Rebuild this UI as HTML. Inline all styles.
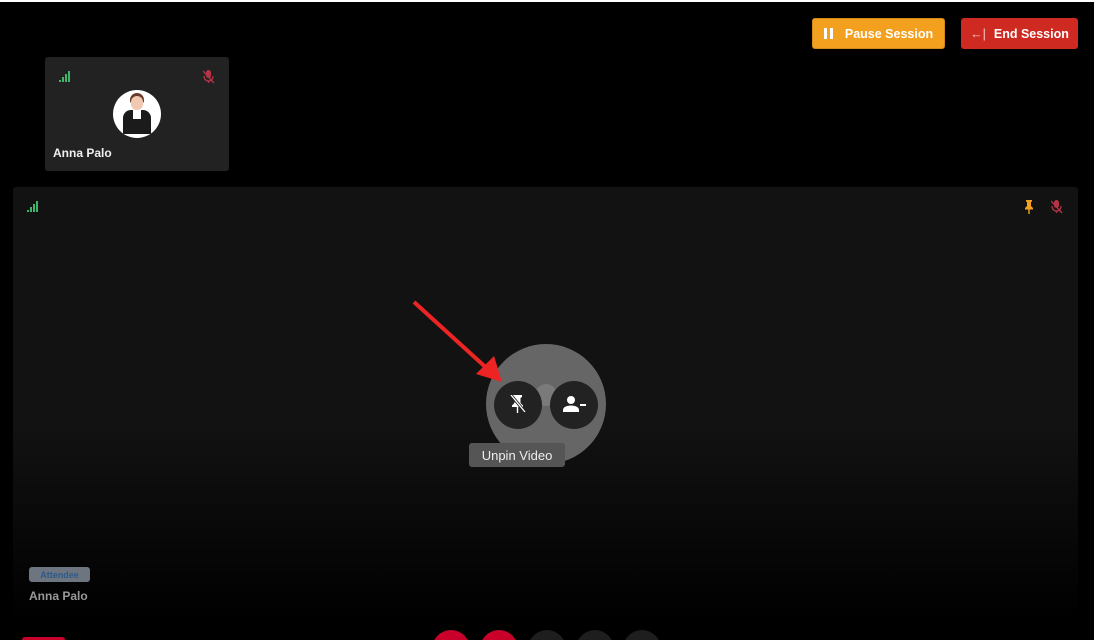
<!DOCTYPE html>
<html style="width:1094px;height:640px;overflow:hidden"><head><meta charset="utf-8"><style>
*{margin:0;padding:0;box-sizing:border-box}
html,body{width:1094px;height:640px;overflow:hidden}
body{background:#000;position:relative;font-family:"Liberation Sans",sans-serif}
.topline{position:absolute;left:0;top:0;width:1094px;height:2px;background:#fff}
.btn{position:absolute;top:18px;height:31px;border-radius:3px;color:#fff;font-weight:bold;font-size:12.5px;display:flex;align-items:center;justify-content:center}
.tile{position:absolute;left:45px;top:57px;width:184px;height:114px;background:#222;border-radius:3px}
.main{position:absolute;left:13px;top:187px;width:1065px;height:434px;border-radius:3px;background:linear-gradient(#121212 0%,#121212 55%,#000 100%)}
.clip{position:absolute;left:0;top:630px;width:1094px;height:10px;overflow:hidden}
.circ{position:absolute;top:0;width:38px;height:38px;border-radius:50%}
</style></head><body>
<div class="topline"></div>
<div class="btn" style="left:812px;width:133px;background:#f4a01f;border:1px solid #d38a1a">
<span style="display:inline-block;width:3px;height:11px;background:#fff;margin-right:3px"></span><span style="display:inline-block;width:3px;height:11px;background:#fff;margin-right:12px"></span>Pause Session</div>
<div class="btn" style="left:961px;width:117px;background:#cf2a22"><span style="font-weight:normal;margin-right:8px;color:#f4c8c4">←|</span>End Session</div>

<div class="tile">
<svg style="position:absolute;left:14px;top:14px" width="12" height="12"><rect x="0" y="9" width="2" height="2" fill="#3fb46b"/><rect x="3" y="6" width="2" height="5" fill="#3fb46b"/><rect x="6" y="3" width="2" height="8" fill="#3fb46b"/><rect x="9" y="0" width="2" height="11" fill="#3fb46b"/></svg>
<svg style="position:absolute;left:158px;top:13px" width="12" height="14"><rect x="3" y="0" width="5" height="8" rx="2.5" fill="#b13545"/><path d="M1 6c0 3 2 5 4.5 5s4.5-2 4.5-5M5.5 11v2M0 1l11 12" stroke="#b13545" stroke-width="1.3" fill="none"/></svg>
<div style="position:absolute;left:68px;top:33px;width:48px;height:48px;border-radius:50%;background:#fff;overflow:hidden">
<div style="position:absolute;left:17px;top:3px;width:14px;height:10px;border-radius:7px 7px 2px 2px;background:#6a3a2a"></div>
<div style="position:absolute;left:18px;top:6px;width:12px;height:14px;border-radius:6px;background:#f1c8b0"></div>
<div style="position:absolute;left:10px;top:20px;width:28px;height:24px;border-radius:8px 8px 0 0;background:#1b1b1b"></div>
<div style="position:absolute;left:20px;top:20px;width:8px;height:9px;background:#fff"></div>
</div>
<div style="position:absolute;left:8px;top:89px;color:#eee;font-weight:bold;font-size:12px">Anna Palo</div>
</div>

<div class="main">
<svg style="position:absolute;left:14px;top:14px" width="12" height="12"><rect x="0" y="9" width="2" height="2" fill="#3fb46b"/><rect x="3" y="6" width="2" height="5" fill="#3fb46b"/><rect x="6" y="3" width="2" height="8" fill="#3fb46b"/><rect x="9" y="0" width="2" height="11" fill="#3fb46b"/></svg>
<svg style="position:absolute;left:1011px;top:13px" width="10" height="14"><path d="M2 0h6v1.5L7 2v4l2 2v1.5H1V8l2-2V2L2 1.5z M4.3 9.5h1.4V14H4.3z" fill="#f4a01f"/></svg>
<svg style="position:absolute;left:1038px;top:13px" width="12" height="14"><rect x="3" y="0" width="5" height="8" rx="2.5" fill="#b13545"/><path d="M1 6c0 3 2 5 4.5 5s4.5-2 4.5-5M5.5 11v2M0 1l11 12" stroke="#b13545" stroke-width="1.3" fill="none"/></svg>
<div style="position:absolute;left:473px;top:157px;width:120px;height:120px;border-radius:50%;background:#666"></div>
<div style="position:absolute;left:522px;top:197px;width:22px;height:22px;border-radius:50%;background:#7a7a7a"></div>
<div style="position:absolute;left:481px;top:194px;width:48px;height:48px;border-radius:50%;background:#222"></div>
<div style="position:absolute;left:537px;top:194px;width:48px;height:48px;border-radius:50%;background:#222"></div>
<svg style="position:absolute;left:497px;top:208px" width="16" height="18"><path d="M3 0h9v2l-1.5 1v5l2.5 2.5V12H2v-1.5L4.5 8V3L3 2z M6.8 12h1.4v6H6.8z" fill="#fff"/><path d="M1 0L15 17" stroke="#222" stroke-width="3"/><path d="M1 0L15 17" stroke="#fff" stroke-width="1.3"/></svg>
<svg style="position:absolute;left:550px;top:209px" width="24" height="16"><circle cx="8" cy="4" r="4" fill="#fff"/><path d="M0 16v-2c0-3 4-4.5 8-4.5s8 1.5 8 4.5v2z" fill="#fff"/><rect x="17" y="8" width="6" height="2" fill="#fff"/></svg>
<div style="position:absolute;left:456px;top:256px;width:96px;height:24px;border-radius:3px;background:#555;color:#eee;font-size:13px;display:flex;align-items:center;justify-content:center">Unpin Video</div>
<div style="position:absolute;left:16px;top:380px;width:61px;height:15px;border-radius:3px;background:#6c7580;color:#2d5a8a;font-size:9px;font-weight:bold;display:flex;align-items:center;justify-content:center">Attendee</div>
<div style="position:absolute;left:16px;top:402px;color:#999;font-size:12px;font-weight:bold">Anna Palo</div>
</div>
<svg style="position:absolute;left:0;top:0" width="1094" height="640"><path d="M414 302L492 373" stroke="#ec2424" stroke-width="4"/><path d="M502 382L476 374L494 356z" fill="#ec2424"/></svg>

<div class="clip">
<div style="position:absolute;left:22px;top:7px;width:43px;height:10px;border-radius:3px;background:#c8002a"></div>
<div class="circ" style="left:432px;background:#c8002a"></div>
<div class="circ" style="left:480px;background:#c8002a"></div>
<div class="circ" style="left:528px;background:#1e1e1e"></div>
<div class="circ" style="left:576px;background:#1e1e1e"></div>
<div class="circ" style="left:623px;background:#1e1e1e"></div>
</div>
</body></html>
